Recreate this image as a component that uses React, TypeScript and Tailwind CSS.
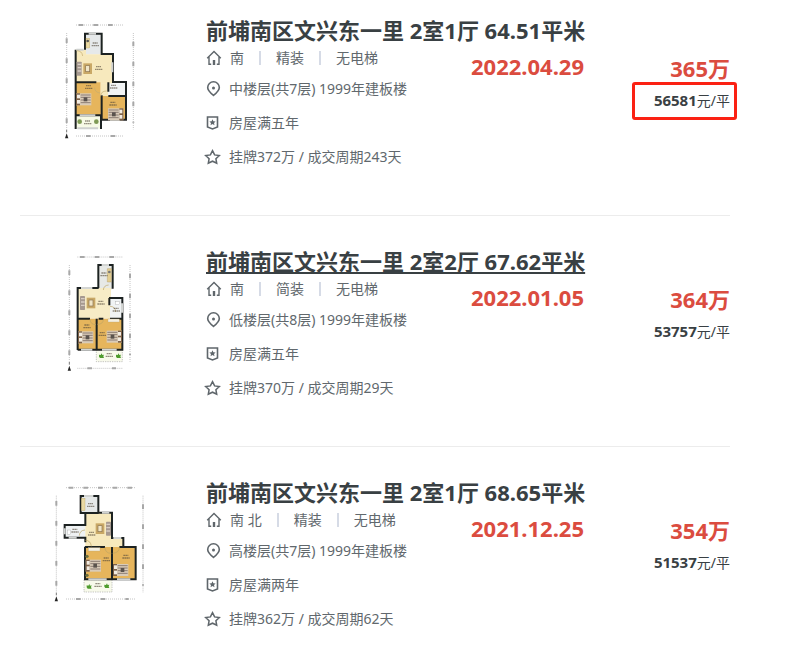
import type { ReactNode } from "react";

type Listing = {
  id: number;
  title: string;
  direction: string;
  decoration: string;
  elevator: string;
  floor: string;
  years: string;
  deal: string;
  date: string;
  total: string;
  unit: string;
  active?: boolean;
  marked?: boolean;
  plan: ReactNode;
};

const WALL = "#1f2220";

function PlanFrame({ id, viewBox, children }: { id: string; viewBox: string; children: ReactNode }) {
  return (
    <svg viewBox={viewBox} className="h-[130px] w-[120px]" aria-hidden="true">
      <filter id={id}>
        <feGaussianBlur stdDeviation="1.3" />
      </filter>
      <g filter={`url(#${id})`}>{children}</g>
    </svg>
  );
}

function Rulers({ x1, x2, y1, y2, left, right }: { x1: number; x2: number; y1: number; y2: number; left: number; right: number }) {
  return (
    <g stroke="#a8a8a8" fill="none">
      <path d={`M${left} ${y1 + 24}V${y2 - 20}M${right} ${y1 + 24}V${y2 - 20}`} strokeWidth="2" strokeDasharray="3 3" />
      <path d={`M${left} ${y1 + 40}V${y2 - 30}M${right} ${y1 + 50}V${y2 - 40}`} strokeWidth="6" strokeDasharray="14 46" />
      <path d={`M${x1} ${y1}H${x2}`} strokeWidth="2" strokeDasharray="3 3" />
      <path d={`M${x1 + 8} ${y1}H${x2 - 6}`} strokeWidth="6" strokeDasharray="14 30" />
      <path d={`M${x1} ${y2}H${x2}`} strokeWidth="2" strokeDasharray="3 3" />
      <path d={`M${x1 + 30} ${y2}H${x2 - 20}`} strokeWidth="6" strokeDasharray="14 60" />
      <path d={`M${left} ${y2 - 8}l-5 15h10z`} fill="#222" stroke="none" />
      <path d={`M${left} ${y2 - 19}v8`} stroke="#777" strokeWidth="3" />
    </g>
  );
}

function Bed({ x, y, flip }: { x: number; y: number; flip?: boolean }) {
  return (
    <g transform={flip ? `translate(${x + 46} ${y}) scale(-1 1)` : `translate(${x} ${y})`}>
      <rect width="46" height="36" fill="#d9cbb8" />
      <rect width="12" height="36" fill="#7d6047" />
      <rect x="3" y="4" width="9" height="11" fill="#f2ece2" />
      <rect x="3" y="20" width="9" height="11" fill="#f2ece2" />
      <path d="M14 5h30M14 12h30M14 20h30M14 28h30" stroke="#8c7d74" strokeWidth="3" />
      <rect x="23" y="12" width="11" height="12" fill="#5a524e" />
    </g>
  );
}

function Sofa({ x, y, flip }: { x: number; y: number; flip?: boolean }) {
  return (
    <g transform={flip ? `translate(${x + 46} ${y}) scale(-1 1)` : `translate(${x} ${y})`}>
      <rect width="15" height="42" rx="2" fill="#a69990" />
      <path d="M3 8h11M3 18h11M3 28h11" stroke="#d8cdc4" strokeWidth="4" />
      <rect x="20" y="5" width="26" height="32" fill="#c9a866" />
      <rect x="27" y="12" width="12" height="18" fill="#f0e5c6" stroke="#8a7350" strokeWidth="2" />
    </g>
  );
}

function Label({ x, y }: { x: number; y: number }) {
  return <path d={`M${x} ${y}h15M${x - 3} ${y + 8}h22`} stroke="#53483a" strokeWidth="4" strokeDasharray="5 1" opacity="0.6" />;
}

function Plant({ x, y }: { x: number; y: number }) {
  return <path d={`M${x - 7} ${y - 3}l5 1 3-5 2 5 5-1-2 5 2 5h-12l-3-4z`} fill="#4f9c2f" />;
}

function PlanA() {
  return (
    <PlanFrame id="plan-a" viewBox="-30 3 360 390">
      <Rulers x1={78} x2={222} y1={30} y2={363} left={50} right={250} />
      <path d="M106 56h48v62h-48z" fill="#e6e9ea" />
      <path d="M76 104h32v14h80v88h-35v-4H76z" fill="#f7e9bd" />
      <path d="M76 202h76v98H76zM152 242h74v72h-74z" fill="#e6b55c" />
      <path d="M152 205h22v38h-22z" fill="#f7e9bd" />
      <path d="M174 205h53v38h-53z" fill="#f1f4f5" />
      <path d="M76 301h76v40H76z" fill="#f7fae6" />
      <path d="M105 104V56h50v61h34v84h39v113h-73v-73M77 104v238M77 202h62M77 301h76v41M189 182v20M175 202v28M175 243h53" fill="none" stroke={WALL} strokeWidth="6" />
      <path d="M116 56h22M187 142v30M89 301h47M180 314h30M79 104h22M82 340h62" stroke="#cfd1cf" strokeWidth="6" />
      <path d="M80 107q16 0 18 16M152 244q0-16 18-16M134 218q0 14 16 16" fill="none" stroke="#c2ac70" strokeWidth="2" />
      <rect x="108" y="70" width="11" height="29" fill="#ead9a2" stroke="#b39c5d" />
      <circle cx="113" cy="78" r="4" fill="#555" />
      <Sofa x={80} y={140} />
      <Bed x={78} y={235} />
      <Bed x={174} y={280} flip />
      <Label x={128} y={84} />
      <Label x={138} y={155} />
      <Label x={108} y={212} />
      <Label x={183} y={211} />
      <Label x={181} y={262} />
      <Label x={105} y={318} />
      <circle cx="89" cy="320" r="7" fill="#7f9a55" />
      <circle cx="139" cy="320" r="7" fill="#7f9a55" />
    </PlanFrame>
  );
}

function PlanB() {
  return (
    <PlanFrame id="plan-b" viewBox="-30 -9 360 390">
      <Rulers x1={82} x2={218} y1={21} y2={355} left={58} right={240} />
      <path d="M146 46h41v72h-41z" fill="#e7e9e6" />
      <path d="M83 114h100v92H83z" fill="#f7ecc6" />
      <path d="M180 145h37v60h-37z" fill="#f0f3f4" />
      <path d="M83 206h133v93H83z" fill="#e6b55c" />
      <path d="M139 300h78v35h-78z" fill="#f8faeb" stroke="#aaa" strokeWidth="2" strokeDasharray="4 3" />
      <path d="M145 114V45h43v71M83 300V114h63M177 144h40v155H83M140 206v93M83 206h37M146 206h14M178 144v22M180 206h37" fill="none" stroke={WALL} strokeWidth="6" />
      <path d="M155 45h22M93 114h34M216 160v28M93 299h34M156 299h44" stroke="#d3d5d3" strokeWidth="6" />
      <path d="M120 208q1 16 18 16M160 208q0 15-18 15M180 169q16 0 17 17M160 120q1-14 16-15" fill="none" stroke="#bca563" strokeWidth="2" />
      <path d="M172 56h12v40h-12z" fill="#e3ce91" stroke="#a18851" />
      <circle cx="178" cy="66" r="4" fill="#777" />
      <rect x="197" y="155" width="12" height="9" fill="#fff" stroke="#999" />
      <rect x="174" y="207" width="34" height="9" fill="#f5f0e2" stroke="#b7a275" />
      <Sofa x={90} y={138} />
      <Bed x={84} y={244} />
      <Bed x={170} y={242} flip />
      <Label x={154} y={69} />
      <Label x={145} y={154} />
      <Label x={191} y={175} />
      <Label x={103} y={225} />
      <Label x={149} y={248} />
      <Label x={170} y={311} />
      <Plant x={154} y={317} />
      <Plant x={205} y={317} />
    </PlanFrame>
  );
}

function PlanC() {
  return (
    <PlanFrame id="plan-c" viewBox="0 -6 360 390">
      <Rulers x1={78} x2={286} y1={23} y2={357} left={49} right={309} />
      <path d="M121 48h54v51h-54z" fill="#e5e8e8" />
      <path d="M75 136h61v38H75z" fill="#eff2f3" />
      <path d="M136 98h80v76h34v28H136z" fill="#f7e9bd" />
      <path d="M135 201h152v97H135z" fill="#e6b55c" />
      <path d="M132 299h84v37h-84z" fill="#f8faeb" stroke="#aaa" strokeWidth="2" strokeDasharray="4 3" />
      <path d="M136 99h-14V48h53v50h41v76h34v27h37v97H135v-98M136 99v36H74v38h62v14M216 201v97M135 201h60M238 201h13M136 99h40" fill="none" stroke={WALL} strokeWidth="6" />
      <path d="M132 48h28M86 173h24M186 98h22M145 298h55M231 298h40M74 145v18M220 174h24" stroke="#d1d3d1" strokeWidth="6" />
      <path d="M136 181q16 0 18 18M195 202q0 18 19 18M238 202q0 16-20 18M135 150q-16 1-17 17" fill="none" stroke="#bca563" strokeWidth="2" />
      <rect x="124" y="55" width="11" height="37" fill="#ead9a2" stroke="#b39c5d" />
      <rect x="82" y="150" width="10" height="13" fill="#fff" stroke="#999" />
      <rect x="145" y="203" width="35" height="10" fill="#f5f0e2" stroke="#b7a275" />
      <Sofa x={167} y={125} flip />
      <Bed x={137} y={239} />
      <Bed x={219} y={252} />
      <circle cx="141" cy="229" r="5" fill="#6c7040" />
      <circle cx="141" cy="286" r="5" fill="#6c7040" />
      <Label x={144} y={71} />
      <Label x={97} y={148} />
      <Label x={147} y={157} />
      <Label x={191} y={234} />
      <Label x={250} y={226} />
      <Label x={166} y={311} />
      <Plant x={147} y={319} />
      <Plant x={200} y={317} />
    </PlanFrame>
  );
}

function HouseIcon() {
  return (
    <svg viewBox="0 0 16 16" className="size-4" fill="none" stroke="#5f666b" strokeWidth="1.4" aria-hidden="true">
      <path d="M1.2 8.2 8 1.6l6.8 6.6M3 6.9v7.4h2.2M13 6.9v7.4h-2.2" />
      <path d="M8 10v5" strokeWidth="2.4" />
    </svg>
  );
}

function PinIcon() {
  return (
    <svg viewBox="0 0 16 16" className="size-4" fill="none" stroke="#5f666b" strokeWidth="1.6" aria-hidden="true">
      <path d="M7.5 14.4C4.4 12 1.7 9.6 1.7 6.6a5.8 5.8 0 0 1 11.6 0c0 3-2.700 5.400-5.800 7.800z" />
      <circle cx="7.5" cy="6.900" r="1.500" fill="#5f666b" stroke="none" />
    </svg>
  );
}

function BadgeIcon() {
  return (
    <svg viewBox="0 0 16 16" className="size-4" fill="none" stroke="#5f666b" strokeWidth="1.6" aria-hidden="true">
      <path d="M1.500 2h10v10l-5 2-5-2z" />
      <path d="m6.500 4.300.9 2 2.200.2-1.600 1.500.5 2.200-2-1.100-2 1.100.5-2.200-1.600-1.500 2.200-.2z" fill="#5f666b" stroke="none" />
    </svg>
  );
}

function StarIcon() {
  return (
    <svg viewBox="0 0 16 16" className="size-4 overflow-visible" fill="none" stroke="#5f666b" strokeWidth="1.5" aria-hidden="true">
      <path d="m6.500 1.700 2.100 4.200 4.700.6-3.400 3.200.8 4.500-4.200-2-4.200 2 .8-4.500L-.3 6.500l4.700-.6z" />
    </svg>
  );
}

const listings: Listing[] = [
  {
    id: 1,
    title: "前埔南区文兴东一里 2室1厅 64.51平米",
    direction: "南",
    decoration: "精装",
    elevator: "无电梯",
    floor: "中楼层(共7层) 1999年建板楼",
    years: "房屋满五年",
    deal: "挂牌372万 / 成交周期243天",
    date: "2022.04.29",
    total: "365",
    unit: "56581",
    marked: true,
    plan: <PlanA />,
  },
  {
    id: 2,
    title: "前埔南区文兴东一里 2室2厅 67.62平米",
    direction: "南",
    decoration: "简装",
    elevator: "无电梯",
    floor: "低楼层(共8层) 1999年建板楼",
    years: "房屋满五年",
    deal: "挂牌370万 / 成交周期29天",
    date: "2022.01.05",
    total: "364",
    unit: "53757",
    active: true,
    plan: <PlanB />,
  },
  {
    id: 3,
    title: "前埔南区文兴东一里 2室1厅 68.65平米",
    direction: "南 北",
    decoration: "精装",
    elevator: "无电梯",
    floor: "高楼层(共7层) 1999年建板楼",
    years: "房屋满两年",
    deal: "挂牌362万 / 成交周期62天",
    date: "2021.12.25",
    total: "354",
    unit: "51537",
    plan: <PlanC />,
  },
];

function InfoRow({ icon, children }: { icon: ReactNode; children: ReactNode }) {
  return (
    <div className="flex h-[34px] items-center gap-[7px]">
      {icon}
      <span>{children}</span>
    </div>
  );
}

function ListingItem({ item }: { item: Listing }) {
  return (
    <li className="flex gap-[26px] border-b border-[#ececec] pt-[31px] pb-[41px] first:pt-4 last:border-0 last:pb-0">
      <a href="#" aria-label={item.title} className="flex w-40 shrink-0 justify-center self-start">
        {item.plan}
      </a>
      <div className="min-w-0 flex-1">
        <h2 className="h-7 whitespace-nowrap text-[22px] leading-7 font-bold text-[#394043]">
          <a href="#" className={item.active ? "underline decoration-2 underline-offset-2" : ""}>
            {item.title}
          </a>
        </h2>
        <div className="flex">
          <div className="w-[265px] shrink-0 whitespace-nowrap text-sm text-[#61686d]">
            <div className="flex h-7 items-center">
              <HouseIcon />
              <span className="ml-2">{item.direction}</span>
              <span className="mx-[15px] h-3.5 w-0.5 bg-[#d6dbe6]" />
              <span>{item.decoration}</span>
              <span className="mx-[15px] h-3.5 w-0.5 bg-[#d6dbe6]" />
              <span>{item.elevator}</span>
            </div>
            <InfoRow icon={<PinIcon />}>{item.floor}</InfoRow>
            <InfoRow icon={<BadgeIcon />}>{item.years}</InfoRow>
            <InfoRow icon={<StarIcon />}>{item.deal}</InfoRow>
          </div>
          <time className="pt-2 text-[22px] leading-7 font-bold text-[#db4c3f]">{item.date}</time>
          <div className="ml-auto pt-2.5 text-right whitespace-nowrap">
            <div className="text-[22px] leading-7 font-bold text-[#db4c3f]">{item.total}万</div>
            <div className="relative text-sm leading-9 text-[#394043]">
              <span className="text-[15px] font-bold">{item.unit}</span>元/平
              {item.marked && (
                <span className="absolute top-0 -right-[7px] h-[38px] w-[105px] rounded-[3px] border-3 border-[#fb2113]" />
              )}
            </div>
          </div>
        </div>
      </div>
    </li>
  );
}

export default function App() {
  return (
    <main className="min-h-screen bg-white pr-[55px] pl-5 font-['Noto_Sans','Noto_Sans_CJK_SC',sans-serif]">
      <ul>
        {listings.map((item) => (
          <ListingItem key={item.id} item={item} />
        ))}
      </ul>
    </main>
  );
}
